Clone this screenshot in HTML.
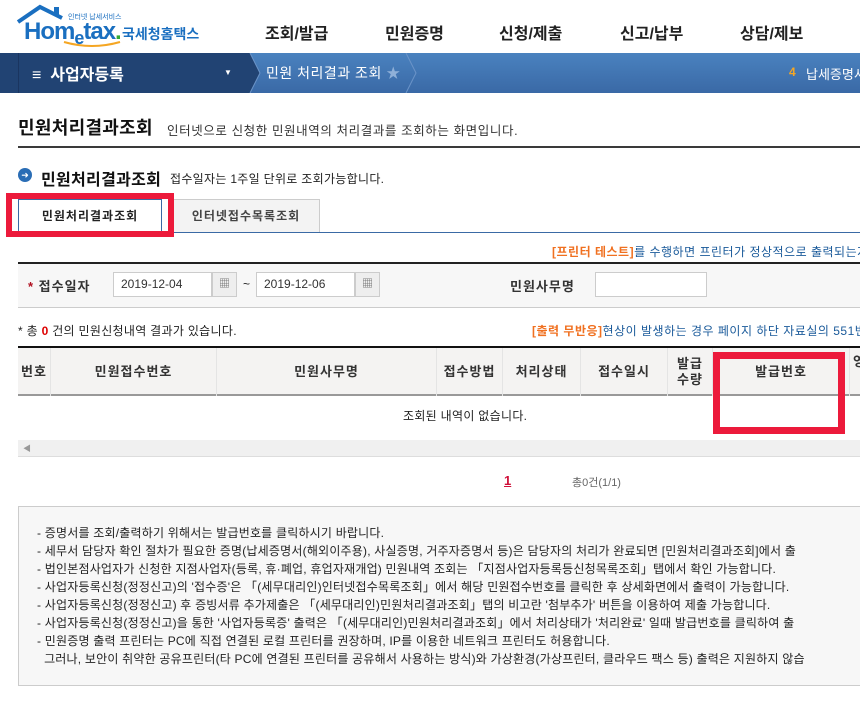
<!DOCTYPE html>
<html><head><meta charset="utf-8"><style>
*{margin:0;padding:0;box-sizing:border-box}
body{width:860px;height:710px;overflow:hidden;background:#fff;font-family:"Liberation Sans","Noto Sans CJK KR","NanumGothic",sans-serif;color:#222;position:relative;font-size:12px}
.a{position:absolute;white-space:nowrap}
.nav{font-size:16px;font-weight:bold;color:#222;top:20px}
.th{position:absolute;top:0;height:48px;border-right:1px solid #e4e4e4;display:flex;align-items:center;justify-content:center;font-weight:bold;font-size:13px;color:#333;text-align:center;line-height:16px;letter-spacing:1px}
.info div{height:18px;line-height:18px}
</style></head><body>
<svg class="a" style="left:16px;top:4px" width="60" height="22" viewBox="0 0 60 22"><path d="M2 18 L24 3 L46 14" fill="none" stroke="#1a6fc0" stroke-width="4"/><rect x="38" y="3" width="5" height="8" fill="#1a6fc0"/></svg>
<div class="a" style="left:68px;top:12px;font-size:7px;color:#1a6fc0">인터넷 납세서비스</div>
<div class="a" style="left:24px;top:18px;font-size:24px;font-weight:bold;color:#1a6fc0;letter-spacing:-1px">Hom<span style="font-size:18px;position:relative;top:5px">e</span>tax<span style="color:#3a3">.</span></div>
<svg class="a" style="left:62px;top:40px" width="60" height="8"><path d="M2 2 Q30 10 58 2" fill="none" stroke="#f5a623" stroke-width="2"/></svg>
<div class="a" style="left:122px;top:24px;font-size:14px;color:#1a6fc0;font-weight:bold">국세청홈택스</div>
<div class="a nav" style="left:265px">조회/발급</div>
<div class="a nav" style="left:385px">민원증명</div>
<div class="a nav" style="left:499px">신청/제출</div>
<div class="a nav" style="left:620px">신고/납부</div>
<div class="a nav" style="left:740px">상담/제보</div>
<div class="a" style="left:0;top:53px;width:860px;height:40px;background:linear-gradient(#4a82bf,#3a69a6)"></div>
<div class="a" style="left:0;top:53px;width:250px;height:40px;background:#214373"></div>
<svg class="a" style="left:240px;top:53px" width="30" height="40"><path d="M0 0 L10 0 L20 20 L10 40 L0 40Z" fill="#214373"/><path d="M10 0 L20 20 L10 40" fill="none" stroke="#6b94c8" stroke-width="1"/></svg>
<svg class="a" style="left:405px;top:53px" width="14" height="40"><path d="M1 0 L11 20 L1 40" fill="none" stroke="#6b94c8" stroke-width="1"/></svg>
<div class="a" style="left:18px;top:53px;width:1px;height:40px;background:#1a3560"></div>
<div class="a" style="left:32px;top:61px;font-size:16px;color:#fff;font-weight:bold">≡&nbsp; 사업자등록</div>
<div class="a" style="left:224px;top:68px;font-size:8px;color:#fff">▼</div>
<div class="a" style="left:266px;top:63px;font-size:14px;color:#fff;letter-spacing:0.5px">민원 처리결과 조회 <span style="color:#8fb0d8">★</span></div>
<div class="a" style="left:789px;top:65px;font-size:12px;color:#f5a623;font-weight:bold">4</div>
<div class="a" style="left:806px;top:64px;font-size:13px;color:#fff">납세증명서</div>
<div class="a" style="left:18px;top:114px;font-size:18px;font-weight:bold;color:#111;letter-spacing:0.3px">민원처리결과조회</div>
<div class="a" style="left:167px;top:120px;font-size:12.5px;color:#333;letter-spacing:0.6px">인터넷으로 신청한 민원내역의 처리결과를 조회하는 화면입니다.</div>
<div class="a" style="left:18px;top:146px;width:842px;height:2px;background:#3a3a3a"></div>
<div class="a" style="left:18px;top:168px;width:14px;height:14px;border-radius:50%;background:#2a6db5;color:#fff;font-size:9px;text-align:center;line-height:14px">➜</div>
<div class="a" style="left:41px;top:166px;font-size:16px;font-weight:bold;color:#111;letter-spacing:0.3px">민원처리결과조회</div>
<div class="a" style="left:170px;top:170px;font-size:12px;color:#222;letter-spacing:0.3px">접수일자는 1주일 단위로 조회가능합니다.</div>
<div class="a" style="left:18px;top:232px;width:842px;height:1px;background:#3a6aa5"></div>
<div class="a" style="left:18px;top:199px;width:144px;height:34px;background:#fff;border:1px solid #3a6aa5;border-bottom:none;text-align:center;line-height:32px;font-weight:bold;font-size:12px;color:#222;letter-spacing:1px">민원처리결과조회</div>
<div class="a" style="left:172px;top:199px;width:148px;height:33px;background:#f3f3f3;border:1px solid #ccc;border-bottom:none;text-align:center;line-height:32px;font-weight:bold;font-size:12px;color:#444;letter-spacing:1px">인터넷접수목록조회</div>
<div class="a" style="left:6px;top:193px;width:168px;height:44px;border:6px solid #ec1a3b"></div>
<div class="a" style="left:552px;top:243px;font-size:12px;color:#1a5a9a;letter-spacing:0.5px"><b style="color:#f07020">[프린터 테스트]</b>를 수행하면 프린터가 정상적으로 출력되는지</div>
<div class="a" style="left:18px;top:262px;width:842px;height:46px;background:#f7f7f7;border-top:2px solid #222;border-bottom:1px solid #ccc"></div>
<div class="a" style="left:28px;top:276px;font-size:13px;font-weight:bold;color:#333;letter-spacing:1px"><span style="color:#b01020">*</span> 접수일자</div>
<div class="a" style="left:113px;top:272px;width:99px;height:25px;background:#fff;border:1px solid #ccc;padding-left:7px;line-height:23px;font-size:12px;color:#333">2019-12-04</div>
<div class="a" style="left:212px;top:272px;width:25px;height:25px;background:#eee;border:1px solid #ccc;text-align:center;line-height:22px;font-size:11px;color:#666">▦</div>
<div class="a" style="left:243px;top:277px;font-size:12px">~</div>
<div class="a" style="left:256px;top:272px;width:99px;height:25px;background:#fff;border:1px solid #ccc;padding-left:7px;line-height:23px;font-size:12px;color:#333">2019-12-06</div>
<div class="a" style="left:355px;top:272px;width:25px;height:25px;background:#eee;border:1px solid #ccc;text-align:center;line-height:22px;font-size:11px;color:#666">▦</div>
<div class="a" style="left:510px;top:276px;font-size:13px;font-weight:bold;color:#333;letter-spacing:1px">민원사무명</div>
<div class="a" style="left:595px;top:272px;width:112px;height:25px;background:#fff;border:1px solid #ccc"></div>
<div class="a" style="left:18px;top:322px;font-size:12px;letter-spacing:0.3px">* 총 <b style="color:#d00">0</b> 건의 민원신청내역 결과가 있습니다.</div>
<div class="a" style="left:532px;top:322px;font-size:12px;color:#1a5a9a;letter-spacing:0.5px"><b style="color:#f07020">[출력 무반응]</b>현상이 발생하는 경우 페이지 하단 자료실의 551번</div>
<div class="a" style="left:18px;top:346px;width:842px;height:50px;background:#f4f3f2;border-top:2px solid #111;border-bottom:2px solid #999">
<div class="th" style="left:0;width:33px">번호</div>
<div class="th" style="left:33px;width:166px">민원접수번호</div>
<div class="th" style="left:199px;width:220px">민원사무명</div>
<div class="th" style="left:419px;width:66px">접수방법</div>
<div class="th" style="left:485px;width:78px">처리상태</div>
<div class="th" style="left:563px;width:87px">접수일시</div>
<div class="th" style="left:650px;width:45px">발급<br>수량</div>
<div class="th" style="left:695px;width:137px">발급번호</div>
<div class="th" style="left:832px;width:20px;align-items:flex-start;padding-top:6px">영</div>
</div>
<div class="a" style="left:403px;top:407px;font-size:12px;color:#222;letter-spacing:0.3px">조회된 내역이 없습니다.</div>
<div class="a" style="left:18px;top:440px;width:842px;height:17px;background:#f0f0f0;border-bottom:1px solid #ddd"></div>
<div class="a" style="left:23px;top:443px;font-size:8px;color:#999">◀</div>
<div class="a" style="left:713px;top:352px;width:132px;height:82px;border:7px solid #ec1a3b"></div>
<div class="a" style="left:504px;top:473px;font-size:13px;font-weight:bold;color:#d0103a;text-decoration:underline">1</div>
<div class="a" style="left:572px;top:474px;font-size:11px;color:#666">총0건(1/1)</div>
<div class="a info" style="left:18px;top:506px;width:850px;height:180px;background:#f7f7f7;border:1px solid #ccc;padding:17px 0 0 18px;font-size:12px;color:#222;letter-spacing:0.2px">
<div>- 증명서를 조회/출력하기 위해서는 발급번호를 클릭하시기 바랍니다.</div>
<div>- 세무서 담당자 확인 절차가 필요한 증명(납세증명서(해외이주용), 사실증명, 거주자증명서 등)은 담당자의 처리가 완료되면 [민원처리결과조회]에서 출</div>
<div>- 법인본점사업자가 신청한 지점사업자(등록, 휴·폐업, 휴업자재개업) 민원내역 조회는 「지점사업자등록등신청목록조회」탭에서 확인 가능합니다.</div>
<div>- 사업자등록신청(정정신고)의 '접수증'은 「(세무대리인)인터넷접수목록조회」에서 해당 민원접수번호를 클릭한 후 상세화면에서 출력이 가능합니다.</div>
<div>- 사업자등록신청(정정신고) 후 증빙서류 추가제출은 「(세무대리인)민원처리결과조회」탭의 비고란 '첨부추가' 버튼을 이용하여 제출 가능합니다.</div>
<div>- 사업자등록신청(정정신고)을 통한 '사업자등록증' 출력은 「(세무대리인)민원처리결과조회」에서 처리상태가 '처리완료' 일때 발급번호를 클릭하여 출</div>
<div>- 민원증명 출력 프린터는 PC에 직접 연결된 로컬 프린터를 권장하며, IP를 이용한 네트워크 프린터도 허용합니다.</div>
<div>&nbsp;&nbsp;그러나, 보안이 취약한 공유프린터(타 PC에 연결된 프린터를 공유해서 사용하는 방식)와 가상환경(가상프린터, 클라우드 팩스 등) 출력은 지원하지 않습</div>
</div>
</body></html>
